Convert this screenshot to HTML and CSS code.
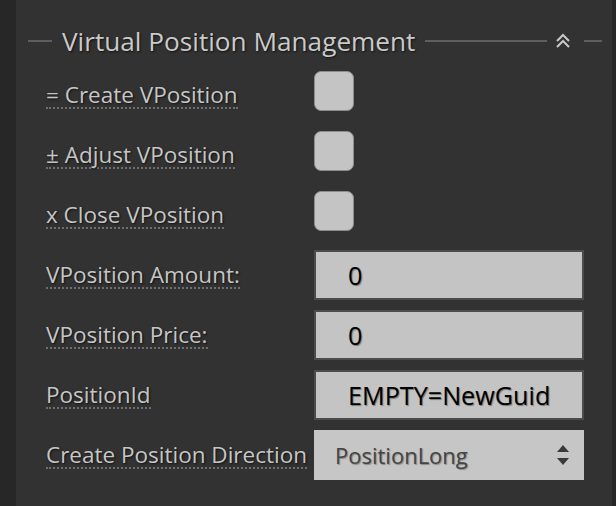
FILE: index.html
```html
<!DOCTYPE html>
<html lang="en">
<head>
    <meta charset="UTF-8">
    <title>Virtual Position Management</title>
    <link rel="stylesheet" href="styles.css">
</head>
<body>
    <div class="panel">
        <div class="legend">
            <span class="rule rule-short"></span>
            <span class="legend-title">Virtual Position Management</span>
            <span class="rule rule-long"></span>
            <svg class="collapse" width="16" height="16" viewBox="0 0 16 16">
                <path d="M2 8 L8 2 L14 8 M2 14 L8 8 L14 14" fill="none" stroke="#c8c8c8" stroke-width="2"/>
            </svg>
            <span class="rule rule-end"></span>
        </div>

        <div class="form">
            <label class="label"><span>= Create VPosition</span></label>
            <div class="field"><span class="check"></span></div>

            <label class="label"><span>± Adjust VPosition</span></label>
            <div class="field"><span class="check"></span></div>

            <label class="label"><span>x Close VPosition</span></label>
            <div class="field"><span class="check"></span></div>

            <label class="label"><span>VPosition Amount:</span></label>
            <div class="field"><div class="input">0</div></div>

            <label class="label"><span>VPosition Price:</span></label>
            <div class="field"><div class="input">0</div></div>

            <label class="label"><span>PositionId</span></label>
            <div class="field"><div class="input">EMPTY=NewGuid</div></div>

            <label class="label"><span>Create Position Direction</span></label>
            <div class="field">
                <div class="select">
                    <span>PositionLong</span>
                    <svg class="spin" width="14" height="24" viewBox="0 0 14 24">
                        <path d="M1 9 L7 2 L13 9 Z M1 15 L7 22 L13 15 Z" fill="#3a3a3a"/>
                    </svg>
                </div>
            </div>
        </div>
    </div>
</body>
</html>
```

FILE: styles.css
```css
body {
    margin: 0;
    background: #272727;
    font-family: 'Open Sans', 'Noto Sans', sans-serif;
    overflow: hidden;
}

.panel {
    margin-left: 16px;
    width: 596px;
    height: 506px;
    background: #323232;
    box-sizing: border-box;
    padding-top: 24px;
}

.legend {
    display: flex;
    align-items: center;
    height: 34px;
    padding: 0 10px 0 12px;
}

.rule {
    height: 2px;
    background: #5e5e5e;
}

.rule-short {
    width: 24px;
}

.rule-long {
    flex: 1;
}

.rule-end {
    width: 18px;
    margin-left: 13px;
}

.legend-title {
    margin: 0 10px;
    font-size: 26.2px;
    color: #cacaca;
    text-shadow: 1px 1px 2px #111;
    white-space: nowrap;
}

.collapse {
    margin-left: 8px;
}

.form {
    display: grid;
    grid-template-columns: 268px 270px;
    grid-auto-rows: 50px;
    row-gap: 10px;
    padding-left: 30px;
    margin-top: 12px;
}

.label {
    display: flex;
    align-items: center;
    font-size: 22.5px;
    color: #c6c6c6;
    text-shadow: 1px 1px 2px #111;
    white-space: nowrap;
    padding-top: 2px;
}

.label span {
    line-height: 24px;
    border-bottom: 2px dotted #6e6e6e;
}

.field {
    display: flex;
    align-items: flex-start;
}

.check {
    display: block;
    width: 38px;
    height: 38px;
    margin-top: 1px;
    background: #c4c4c4;
    border: 1px solid #8c8c8c;
    border-radius: 7px;
}

.input {
    box-sizing: border-box;
    width: 270px;
    height: 50px;
    border: 2px solid #4c4c4c;
    background: #c4c4c4;
    padding-left: 32px;
    font-size: 25.2px;
    line-height: 46px;
    color: #000;
    text-shadow: 1px 1px 1px #777;
}

.select {
    box-sizing: border-box;
    width: 270px;
    height: 50px;
    background: #c6c6c6;
    display: flex;
    align-items: center;
    justify-content: space-between;
    padding: 0 14px 0 21px;
    font-size: 22px;
    color: #444;
    text-shadow: 1px 1px 1px #888;
}
```
